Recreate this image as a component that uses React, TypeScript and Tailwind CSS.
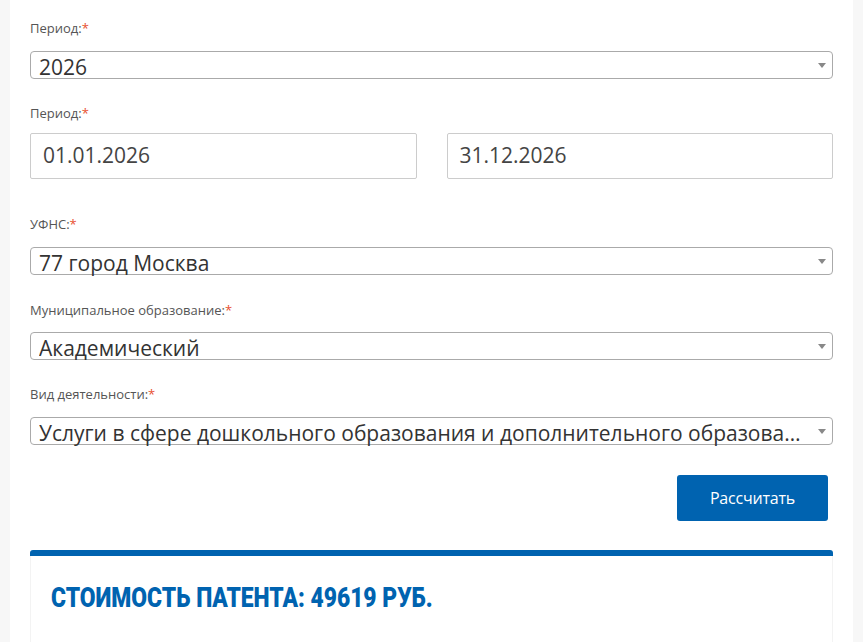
import React from "react"

const font = { fontFamily: '"Open Sans", "Noto Sans", sans-serif' }

function Label({ text }: { text: string }) {
  return (
    <div className="h-[17px] text-[13px] leading-[17px] text-[#555]">
      {text}
      <span className="text-[#e8502f]">*</span>
    </div>
  )
}

function Select({ value }: { value: string }) {
  return (
    <div className="relative flex h-[28px] items-center rounded-[4px] border border-[#aaa] bg-white pl-[8px] pr-[30px]">
      <span className="truncate pt-[3px] text-[21px] leading-[28px] text-[#333]">{value}</span>
      <span className="absolute right-[6px] top-[11px] h-0 w-0 border-x-[4px] border-t-[5px] border-x-transparent border-t-[#888]" />
    </div>
  )
}

function Input({ value }: { value: string }) {
  return (
    <div className="flex h-[46px] flex-1 items-center rounded-[2px] border border-[#ccc] bg-white px-[12px] text-[21px] text-[#444]">
      {value}
    </div>
  )
}

export default function App() {
  return (
    <div className="min-h-[642px] bg-[#f7f7f7] px-[10px]" style={font}>
      <div className="min-h-[642px] bg-white px-[20px] pt-[20px]">
        <Label text="Период:" />
        <div className="mt-[14px]">
          <Select value="2026" />
        </div>

        <div className="mt-[26px]">
          <Label text="Период:" />
        </div>
        <div className="mt-[11px] flex gap-[30px]">
          <Input value="01.01.2026" />
          <Input value="31.12.2026" />
        </div>

        <div className="mt-[37px]">
          <Label text="УФНС:" />
        </div>
        <div className="mt-[14px]">
          <Select value="77 город Москва" />
        </div>

        <div className="mt-[27px]">
          <Label text="Муниципальное образование:" />
        </div>
        <div className="mt-[13px]">
          <Select value="Академический" />
        </div>

        <div className="mt-[26px]">
          <Label text="Вид деятельности:" />
        </div>
        <div className="mt-[14px]">
          <Select value="Услуги в сфере дошкольного образования и дополнительного образования детей" />
        </div>

        <div className="mt-[30px] flex justify-end pr-[5px]">
          <button className="h-[46px] w-[151px] rounded-[3px] bg-[#0063b0] text-[16px] tracking-[-0.2px] text-white">
            Рассчитать
          </button>
        </div>

        <div className="mt-[29px] rounded-t-[3px] border-t-[6px] border-[#0063b0]">
          <div className="h-[86px] border-x border-[#f3f3f3] px-[20px] pt-[24px]">
            <div
              className="origin-left scale-x-[0.815] whitespace-nowrap text-[28px] font-black leading-[36px] text-[#0063b0]"
              style={{ fontFamily: '"Roboto", "Liberation Sans", sans-serif' }}
            >
              СТОИМОСТЬ ПАТЕНТА: 49619 РУБ.
            </div>
          </div>
        </div>
      </div>
    </div>
  )
}
